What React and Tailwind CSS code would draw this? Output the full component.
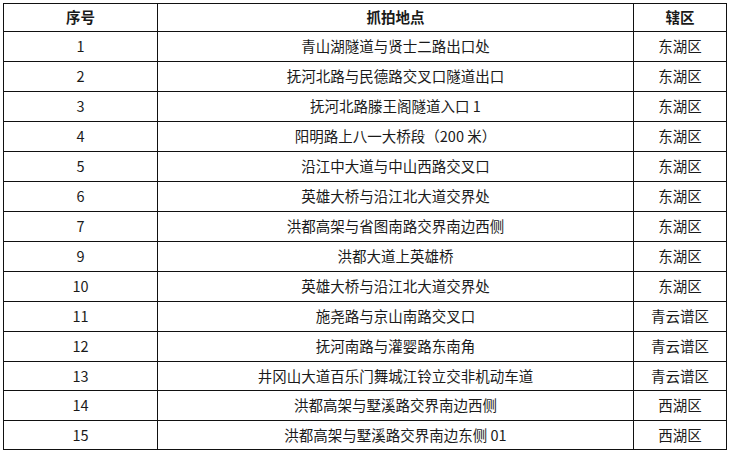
import React from "react";

const rows = [
  ["1", "青山湖隧道与贤士二路出口处", "东湖区"],
  ["2", "抚河北路与民德路交叉口隧道出口", "东湖区"],
  ["3", "抚河北路滕王阁隧道入口 1", "东湖区"],
  ["4", "阳明路上八一大桥段（200 米）", "东湖区"],
  ["5", "沿江中大道与中山西路交叉口", "东湖区"],
  ["6", "英雄大桥与沿江北大道交界处", "东湖区"],
  ["7", "洪都高架与省图南路交界南边西侧", "东湖区"],
  ["9", "洪都大道上英雄桥", "东湖区"],
  ["10", "英雄大桥与沿江北大道交界处", "东湖区"],
  ["11", "施尧路与京山南路交叉口", "青云谱区"],
  ["12", "抚河南路与灌婴路东南角", "青云谱区"],
  ["13", "井冈山大道百乐门舞城江铃立交非机动车道", "青云谱区"],
  ["14", "洪都高架与墅溪路交界南边西侧", "西湖区"],
  ["15", "洪都高架与墅溪路交界南边东侧 01", "西湖区"],
];

// last rows in the picture are a touch shorter
const rowHeight = (index) => {
  if (index === 11 || index === 13) return "h-[29px]";
  return "h-[30px]";
};

const App = () => {
  return (
    <div className="w-[732px] h-[454px] bg-white pt-[3px] pl-[3px] font-['Noto_Sans_CJK_SC',sans-serif] text-[14.5px] text-[#1a1a1a]">
      <table className="table-fixed border-collapse w-[723px]">
        <colgroup>
          <col className="w-[154px]" />
          <col className="w-[476px]" />
          <col className="w-[93px]" />
        </colgroup>
        <thead>
          <tr className="h-[28px]">
            {["序号", "抓拍地点", "辖区"].map((header, index) => (
              <th
                key={index}
                className="border border-[#111] p-0 text-center font-bold leading-none"
              >
                {header}
              </th>
            ))}
          </tr>
        </thead>
        <tbody>
          {rows.map((row, index) => (
            <tr key={index} className={rowHeight(index)}>
              {row.map((cell, i) => (
                <td
                  key={i}
                  className="border border-[#111] p-0 text-center leading-none whitespace-nowrap"
                >
                  {cell}
                </td>
              ))}
            </tr>
          ))}
        </tbody>
      </table>
    </div>
  );
};

export default App;
